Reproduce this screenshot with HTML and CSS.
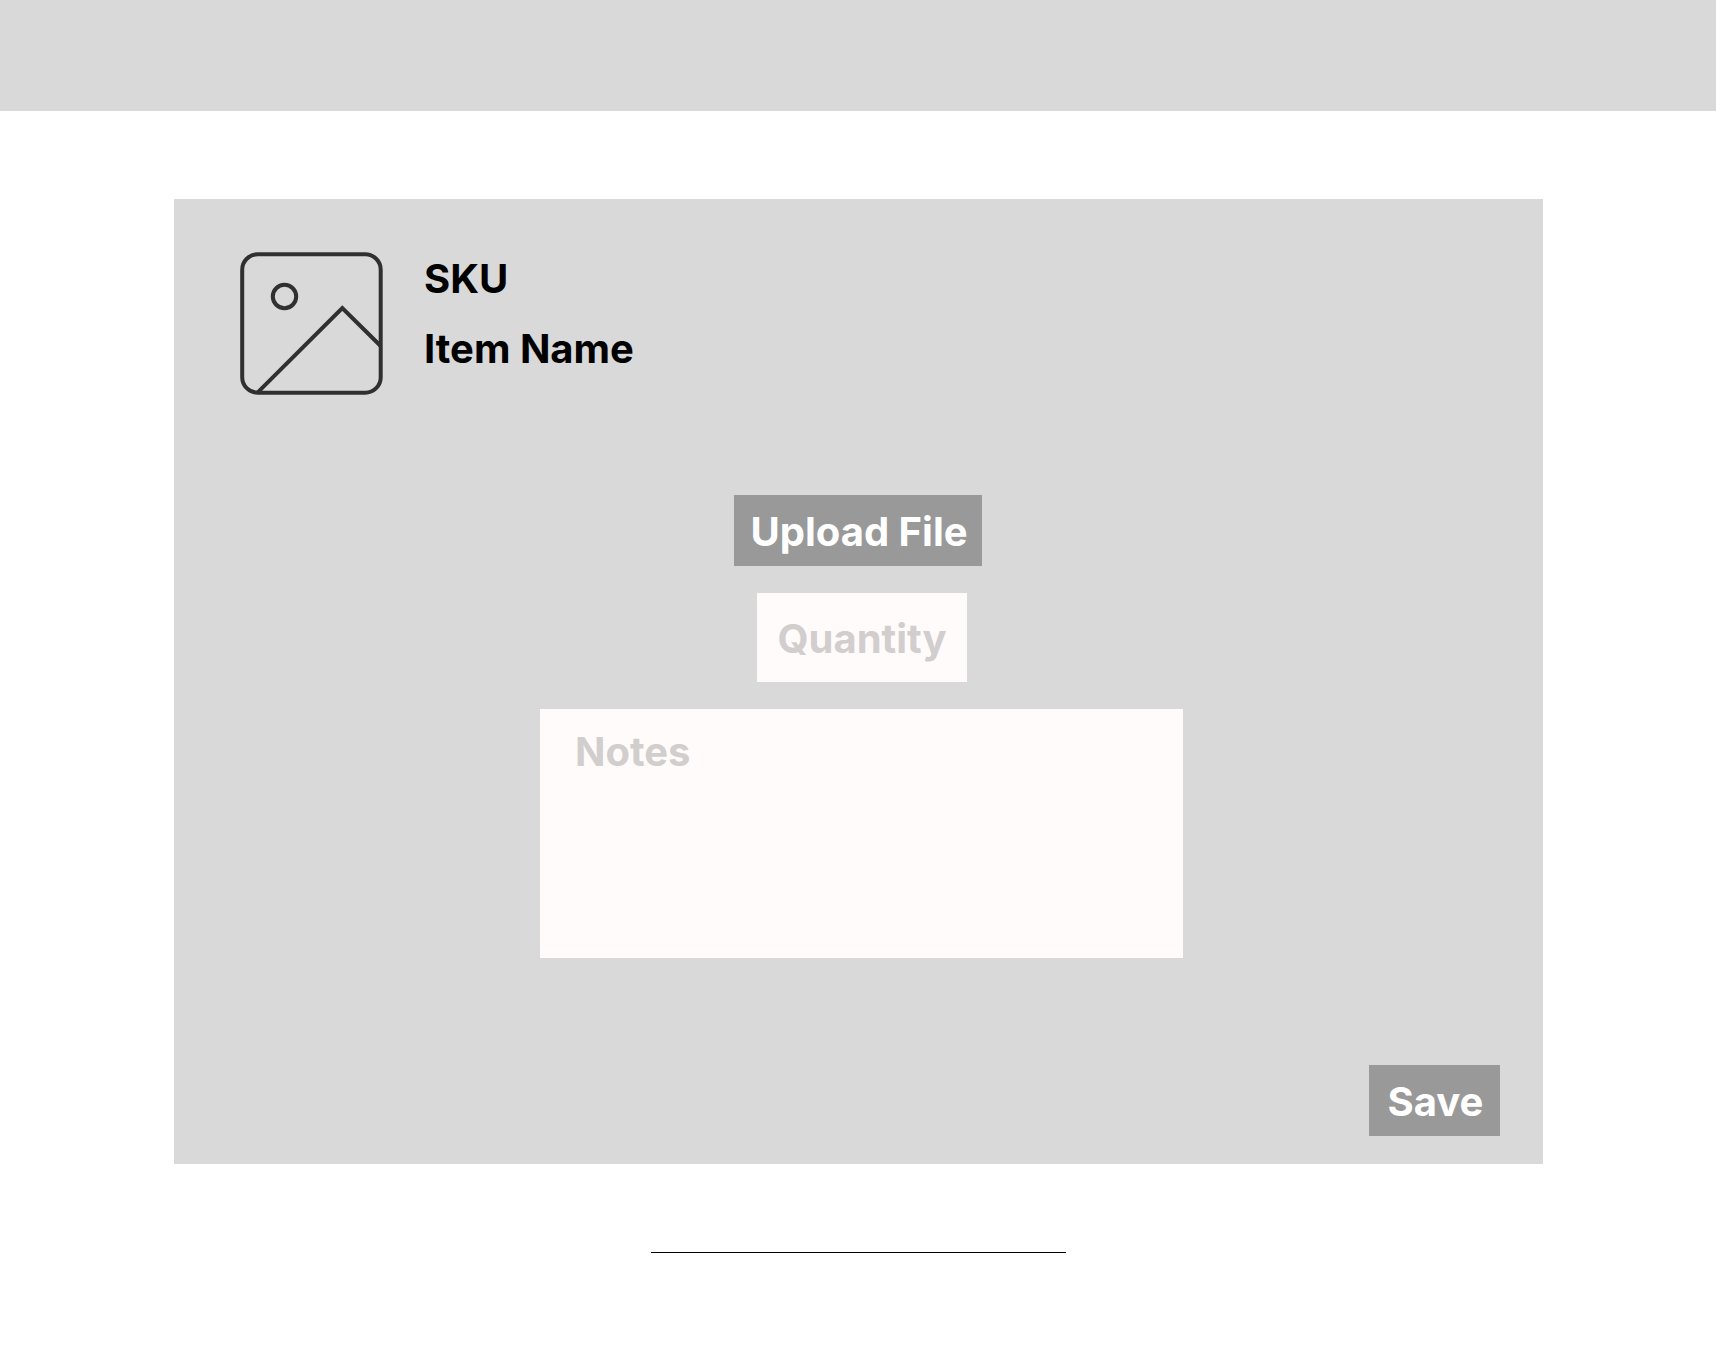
FILE: index.html
```html
<!DOCTYPE html>
<html lang="en">
<head>
<meta charset="utf-8">
<meta name="viewport" content="width=device-width, initial-scale=1">
<title>Item details</title>
<link rel="stylesheet" href="styles.css">
</head>
<body>
<header class="topbar"></header>
<main class="page">
  <form class="card">
    <div class="item">
      <svg class="item-image" viewBox="0 0 144 144" fill="none" stroke="#303030" stroke-width="4" aria-hidden="true">
        <rect x="3.200" y="3.200" width="138.500" height="138.500" rx="15.500"/>
        <circle cx="45.500" cy="45.500" r="11.700"/>
        <path d="M18.500 141.700 103.300 57 141.700 95"/>
      </svg>
      <div class="item-text">
        <h1 class="item-line">SKU</h1>
        <h2 class="item-line">Item Name</h2>
      </div>
    </div>
    <button class="button upload" type="button">Upload File</button>
    <div class="fields">
      <input class="field quantity" type="text" placeholder="Quantity" aria-label="Quantity">
      <textarea class="field notes" placeholder="Notes" aria-label="Notes"></textarea>
    </div>
    <button class="button save" type="submit">Save</button>
  </form>
  <hr class="divider">
</main>
</body>
</html>
```
FILE: styles.css
```css
* {
  box-sizing: border-box;
}

body {
  margin: 0;
  background: #fff;
  color: #000;
  font: 700 40px/48px Inter, "Liberation Sans", sans-serif;
}

.topbar {
  height: 111px;
  background: #d9d9d9;
}

.page {
  display: flex;
  flex-direction: column;
  gap: 88px;
  padding: 88px 173px 104px 174px;
}

.card {
  display: flex;
  flex-direction: column;
  align-items: center;
  padding: 52px 43px 28px 42px;
  background: #d9d9d9;
}

.item {
  display: flex;
  align-self: stretch;
  gap: 41px;
  padding-left: 23px;
}

.item-image {
  width: 144px;
  height: 144px;
}

.item-text {
  display: flex;
  flex-direction: column;
  gap: 22px;
  padding-top: 4px;
}

.item-line {
  margin: 0;
  font: inherit;
}

.button {
  height: 71px;
  padding: 2px 14px 0 16px;
  border: 0;
  background: #999;
  color: #fff;
  font: inherit;
  white-space: nowrap;
  cursor: pointer;
}

.upload {
  min-width: 248px;
  margin: 100px 0 27px;
}

.fields {
  display: flex;
  flex-direction: column;
  align-items: center;
  gap: 27px;
  width: 650px;
  max-width: 100%;
  padding-left: 7px;
  margin: 0;
}

.field {
  border: 0;
  border-radius: 0;
  background: #fffbfa;
  color: #000;
  font: inherit;
}

.field::placeholder {
  color: #d2cecd;
  opacity: 1;
}

.quantity {
  width: 210px;
  height: 89px;
  padding: 2px 10px 0 21px;
}

.notes {
  display: block;
  width: 100%;
  height: 249px;
  padding: 19px 35px;
  resize: none;
}

.save {
  align-self: flex-end;
  min-width: 131px;
  margin-top: 107px;
}

.divider {
  width: 415px;
  max-width: 100%;
  height: 1px;
  margin: 0 auto;
  border: 0;
  background: #000;
}
```
